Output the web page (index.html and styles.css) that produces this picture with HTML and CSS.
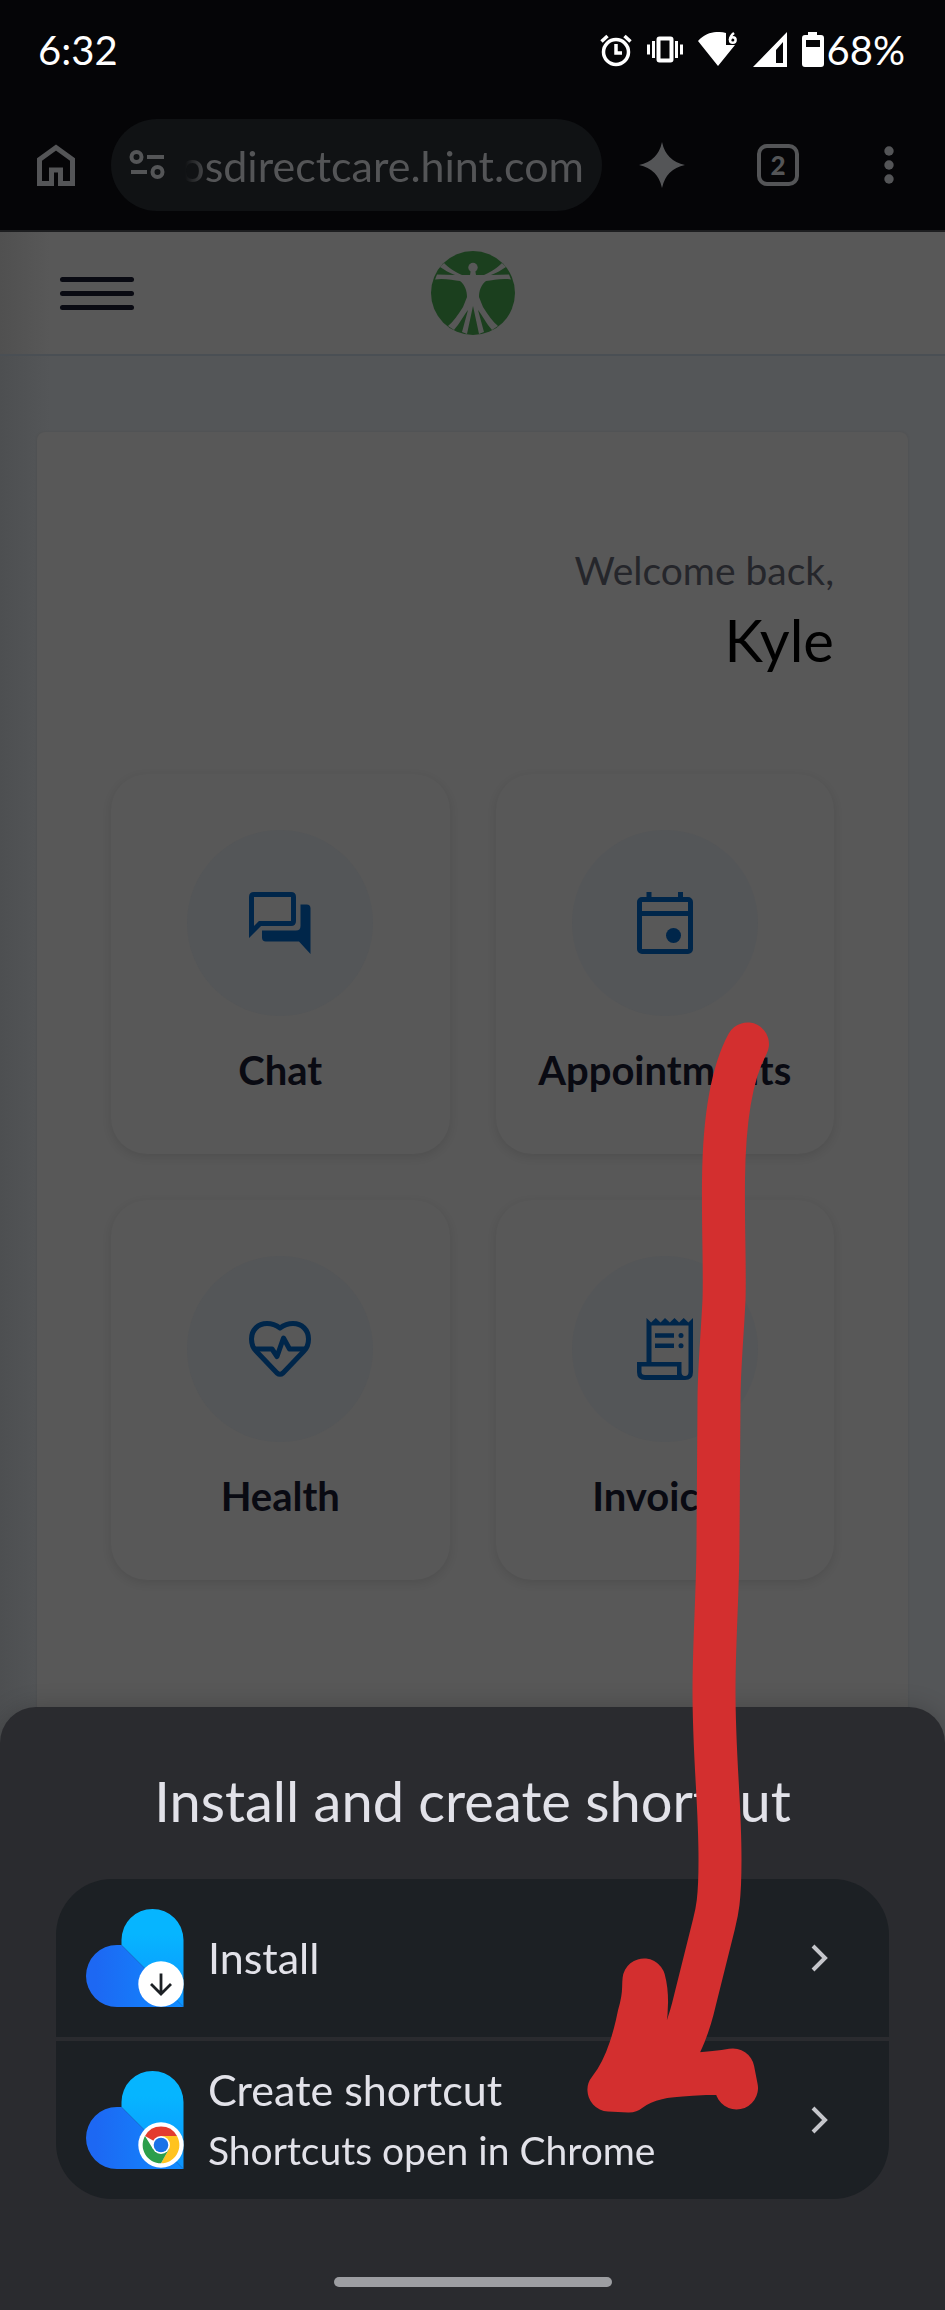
FILE: index.html
```html
<!DOCTYPE html>
<html lang="en">
<head>
    <meta charset="UTF-8">
    <meta name="viewport" content="width=device-width, initial-scale=1.0">
    <title>Install and create shortcut</title>
    <link rel="stylesheet" href="styles.css">
</head>
<body>
    <!-- status bar -->
    <div class="status-bar">
        <span class="clock">6:32</span>
        <div class="status-icons">
            <svg width="32" height="34" viewBox="0 0 32 34" fill="none" stroke="#fff" stroke-width="3.500">
                <circle cx="16" cy="19" r="12.500"/>
                <path d="M16 11v9h6M1.500 8.500l6-5.500M30.500 8.500l-6-5.500"/>
            </svg>
            <svg width="36" height="34" viewBox="0 0 36 34" fill="none" stroke="#fff">
                <rect x="11.500" y="5.500" width="13" height="22" rx="1" stroke-width="4"/>
                <path d="M6.500 8v17M29.500 8v17M1.500 11.500v10M34.500 11.500v10" stroke-width="3"/>
            </svg>
            <svg width="40" height="36" viewBox="0 0 40 36">
                <path d="M0 9C9-1 20-1 28 1v12h9L20 34z" fill="#fff"/>
                <path d="M36 1q-4 3-4 7" fill="none" stroke="#fff" stroke-width="2.500"/>
                <circle cx="34.800" cy="8" r="2.800" fill="none" stroke="#fff" stroke-width="2.500"/>
            </svg>
            <svg width="34" height="36" viewBox="0 0 34 36">
                <path d="M34 0v35H0zM30 10l-7 8v13h7z" fill="#fff" fill-rule="evenodd"/>
            </svg>
            <div class="battery">
                <svg width="22" height="36" viewBox="0 0 22 36">
                    <path d="M6 0h9v3h4q3 0 3 3v26q0 3-3 3H3q-3 0-3-3V6q0-3 3-3h3zM4 8v7h14V8z" fill="#fff" fill-rule="evenodd"/>
                </svg>
                <span>68%</span>
            </div>
        </div>
    </div>

    <!-- browser toolbar -->
    <div class="toolbar">
        <button class="tool" type="button" aria-label="Home">
            <svg width="38" height="42" viewBox="0 0 38 42" fill="none" stroke="#545557" stroke-width="5">
                <path d="M2.500 39.500V15.500L19 3.500l16.500 12v24h-12V26h-9v13.500z"/>
            </svg>
        </button>
        <div class="address">
            <svg width="36" height="30" viewBox="0 0 36 30" fill="none" stroke="#545557" stroke-width="4">
                <circle cx="7.500" cy="7" r="5"/>
                <circle cx="28.500" cy="22" r="5"/>
                <path d="M18 7h17M2 22h16"/>
            </svg>
            <input type="text" class="url" value="osdirectcare.hint.com" aria-label="Address">
        </div>
        <button class="tool" type="button" aria-label="Assistant">
            <svg width="46" height="46" viewBox="0 0 46 46">
                <path d="M23 0Q27 19 46 23Q27 27 23 46Q19 27 0 23Q19 19 23 0z" fill="#545557"/>
            </svg>
        </button>
        <button class="tool tabs" type="button" aria-label="Open tabs">2</button>
        <button class="tool" type="button" aria-label="More">
            <svg width="10" height="38" viewBox="0 0 10 38" fill="#545557">
                <circle cx="5" cy="5" r="4.700"/>
                <circle cx="5" cy="19" r="4.700"/>
                <circle cx="5" cy="33" r="4.700"/>
            </svg>
        </button>
    </div>

    <div class="page">
        <header>
            <button class="menu" type="button" aria-label="Menu"><i></i><i></i><i></i></button>
            <svg class="logo" width="84" height="84" viewBox="0 0 84 84">
                <circle cx="42" cy="42" r="42" fill="#1b3f1e"/>
                <g fill="#585858">
                    <circle cx="42" cy="16.500" r="4.700"/>
                    <path d="M40 18h4l1 6 8 0C62 20 67 16 71 12l4 4C70 19 66 22 60 24l18-.5 2 5C72 27 62 29 55 30C50 34 48 40 48 46L52 56C57 64 62 71 67 75l-6 4C55 72 51 64 47 59l6 22-5 2L42 55L36 83l-5-2L37 59C33 64 29 72 23 79l-6-4C22 71 27 64 32 56L36 46C36 40 34 34 29 30C22 29 12 27 4 28.500l2-5 18 .5C18 22 14 19 9 16l4-4C17 16 22 20 31 24h8z"/>
                </g>
            </svg>
        </header>

        <main class="card">
            <div class="welcome">
                <p>Welcome back,</p>
                <h1>Kyle</h1>
            </div>
            <nav class="tiles">
                <a href="#chat" class="tile">
                    <span class="circle">
                        <svg width="62" height="62" viewBox="0 0 62 62">
                            <path d="M2.500 40V5q0-2.500 2.500-2.500h37q2.500 0 2.500 2.500v24q0 2.500-2.500 2.500H11z" fill="#585858" stroke="#00264a" stroke-width="5"/>
                            <path d="M51.500 12.500h6q4 0 4 4V62L50 49.500H17q-4 0-4-4v-7h34q4.500 0 4.500-4.500z" fill="#00264a"/>
                        </svg>
                    </span>
                    Chat
                </a>
                <a href="#appointments" class="tile">
                    <span class="circle">
                        <svg width="62" height="62" viewBox="0 0 62 62" fill="#585858" stroke="#00264a" stroke-width="5">
                            <rect x="5.500" y="7.500" width="51" height="52" rx="2.500"/>
                            <path d="M15 0v6M46.500 0v6M5 21.500h52"/>
                            <circle cx="39.500" cy="43.500" r="7.500" fill="#00264a" stroke="none"/>
                        </svg>
                    </span>
                    Appointments
                </a>
                <a href="#health" class="tile">
                    <span class="circle">
                        <svg width="62" height="62" viewBox="0 0 62 62" fill="#585858" stroke="#00264a" stroke-width="5" stroke-linejoin="round">
                            <path d="M31 10C27 7 23 5.500 18 5.500C9 5.500 2.500 12 2.500 21c0 5 1.500 9 4.500 12l21 22q3 2.500 6 0l21-22c3-3 4.500-7 4.500-12C59.500 12 53 5.500 44 5.500c-5 0-9 1.500-13 4.500z"/>
                            <path d="M5 31h18l5 7.500L34.500 20l6 11H57" fill="none"/>
                        </svg>
                    </span>
                    Health
                </a>
                <a href="#invoices" class="tile">
                    <span class="circle">
                        <svg width="62" height="62" viewBox="0 0 62 62">
                            <path d="M12.500 0l4.600 4.600L21.800 0l4.700 4.600L31 0l4.800 4.600L40.500 0l4.600 4.600L49.700 0l4.700 4.600L59 0v54q0 8-8 8H11q-8 0-8-8V44h9.500z" fill="#00264a"/>
                            <path d="M17.500 7.500h37V54q0 4-3.500 4t-3.500-4V44h-30z" fill="#585858"/>
                            <path d="M7.500 48.500h35.500V57H11q-3.500 0-3.500-3z" fill="#585858"/>
                            <path d="M21 17.500h19M21 27.800h19" stroke="#00264a" stroke-width="4.500"/>
                            <circle cx="47" cy="17.500" r="2.500" fill="#00264a"/>
                            <circle cx="47" cy="27.800" r="2.500" fill="#00264a"/>
                        </svg>
                    </span>
                    Invoices
                </a>
            </nav>
        </main>
    </div>

    <!-- bottom sheet -->
    <section class="sheet">
        <h2>Install and create shortcut</h2>
        <div class="options">
            <button class="option" type="button">
                <svg width="98" height="98" viewBox="0 0 98 98">
                    <defs>
                        <linearGradient id="sky" x1="0" y1="0" x2="0" y2="1">
                            <stop offset="0.250" stop-color="#06b5ff"/>
                            <stop offset="1" stop-color="#0d93ff"/>
                        </linearGradient>
                        <linearGradient id="blue" x1="0" y1="0" x2="1" y2="0">
                            <stop offset="0.100" stop-color="#1d68f3"/>
                            <stop offset="1" stop-color="#0f8bff"/>
                        </linearGradient>
                    </defs>
                    <path d="M35.500 36V31a31 31 0 0 1 62 0V98z" fill="url(#sky)"/>
                    <path d="M35.500 36H31a31 31 0 0 0 0 62h66.500z" fill="url(#blue)"/>
                    <circle cx="75" cy="75" r="22.700" fill="#fff"/>
                    <path d="M75 64.500v20M65 75l10 10 10-10" fill="none" stroke="#1c2024" stroke-width="2.800"/>
                </svg>
                <span class="option-text">Install</span>
                <svg width="18" height="28" viewBox="0 0 18 28" fill="none" stroke="#c5c6cb" stroke-width="4">
                    <path d="M2 2l12 12L2 26"/>
                </svg>
            </button>
            <button class="option" type="button">
                <svg width="98" height="98" viewBox="0 0 98 98">
                    <path d="M35.500 36V31a31 31 0 0 1 62 0V98z" fill="url(#sky)"/>
                    <path d="M35.500 36H31a31 31 0 0 0 0 62h66.500z" fill="url(#blue)"/>
                    <circle cx="75" cy="74" r="22.700" fill="#fff"/>
                    <path d="M75 74L59 65A18.300 18.300 0 0 1 91 65z" fill="#e33b2e"/>
                    <path d="M75 65h16A18.300 18.300 0 0 1 75 92.300L83 78z" fill="#ffc31f"/>
                    <path d="M59 65A18.300 18.300 0 0 0 75 92.300L83 78H67z" fill="#2c9e4b"/>
                    <circle cx="75" cy="74" r="9" fill="#fff"/>
                    <circle cx="75" cy="74" r="7.300" fill="#1a73e8"/>
                </svg>
                <span class="option-text">Create shortcut<small>Shortcuts open in Chrome</small></span>
                <svg width="18" height="28" viewBox="0 0 18 28" fill="none" stroke="#c5c6cb" stroke-width="4">
                    <path d="M2 2l12 12L2 26"/>
                </svg>
            </button>
        </div>
        <div class="handle"></div>
    </section>

    <!-- hand drawn arrow over everything -->
    <svg class="arrow" width="190" height="1096" viewBox="584 1021 190 1096">
        <path d="M747.500 1044C729 1078 724 1130 723.500 1180C723 1230 725 1270 724 1300C722 1340 719 1370 719 1400L718 1540C718 1590 714 1640 714 1690C714 1760 720 1800 720 1860C720 1900 717 1912 714 1924L695 2000C687 2035 678 2048 665 2075L609 2090C625 2070 633 2045 639 2015C645 1995 643 1990 644 1980M644 1980C652 2010 640 2050 630 2088M609 2090L629 2091C655 2070 690 2078 733 2070L736.500 2088"/>
    </svg>
</body>
</html>
```
FILE: styles.css
```css
* {
    box-sizing: border-box;
}
body {
    margin: 0;
    min-height: 100vh;
    display: flex;
    flex-direction: column;
    position: relative;
    font-family: Lato, "Open Sans", sans-serif;
    background-color: #050507;
}
button {
    font-family: inherit;
    border: none;
    padding: 0;
    background: none;
}
svg {
    display: block;
    flex-shrink: 0;
}

.status-bar {
    display: flex;
    align-items: center;
    justify-content: space-between;
    height: 100px;
    padding: 0 40px 0 38px;
    color: #fff;
    font-size: 40px;
}
.status-icons {
    display: flex;
    align-items: center;
    gap: 15px;
}
.battery {
    display: flex;
    align-items: center;
    gap: 3px;
}

.toolbar {
    display: flex;
    align-items: center;
    height: 132px;
    padding: 0 51px 0 37px;
    border-bottom: 2px solid #1d1e20;
    color: #545557;
}
.tool {
    display: flex;
    align-items: center;
    justify-content: center;
    color: inherit;
}
.address {
    flex: 1;
    display: flex;
    align-items: center;
    height: 92px;
    margin: 0 37px 0 36px;
    padding: 0 18px;
    border-radius: 46px;
    background-color: #101214;
}
.url {
    flex: 1;
    width: 0;
    height: 60px;
    border: none;
    padding: 0;
    background: none;
    color: inherit;
    font-family: inherit;
    font-size: 43px;
    text-align: right;
    mask-image: linear-gradient(to right, transparent 20px, #000 44px);
}
.tabs {
    width: 42px;
    height: 42px;
    margin: 0 85px 0 72px;
    border: 4px solid #545557;
    border-radius: 10px;
    font-size: 26px;
    font-weight: 900;
}

.page {
    flex: 1;
    display: flex;
    flex-direction: column;
    background: linear-gradient(to right, #4d4f51, #545658 50px);
}
header {
    display: flex;
    align-items: center;
    height: 124px;
    padding: 0 60px;
    border-bottom: 2px solid #4a4f54;
    background: linear-gradient(to right, #505050, #585858 50px);
}
.menu {
    flex: 1;
    display: flex;
    flex-direction: column;
    gap: 9px;
}
.menu i {
    width: 74px;
    height: 5px;
    border-radius: 3px;
    background-color: #090a12;
}
header::after {
    content: "";
    flex: 1;
}

.card {
    flex: 1;
    margin: 76px 37px 0;
    padding: 110px 74px 0;
    border-radius: 8px 8px 0 0;
    background-color: #585858;
    box-shadow: 0 0 3px rgba(0, 0, 0, 0.08);
}
.welcome {
    text-align: right;
}
.welcome p {
    margin: 0;
    font-size: 39px;
    line-height: 56px;
    color: #25262b;
}
.welcome h1 {
    margin: 0;
    font-size: 58px;
    line-height: 84px;
    font-weight: 400;
    color: #000;
}
.tiles {
    display: grid;
    grid-template-columns: 1fr 1fr;
    gap: 46px;
    margin-top: 92px;
}
.tile {
    display: flex;
    flex-direction: column;
    align-items: center;
    height: 380px;
    padding-top: 56px;
    border-radius: 36px;
    box-shadow: 0 3px 10px rgba(0, 0, 0, 0.1);
    font-size: 40px;
    line-height: 48px;
    font-weight: 700;
    color: #090a12;
    text-decoration: none;
}
.circle {
    display: flex;
    align-items: center;
    justify-content: center;
    width: 186px;
    height: 186px;
    margin-bottom: 30px;
    border-radius: 50%;
    background-color: #545658;
}

.sheet {
    position: fixed;
    left: 0;
    right: 0;
    bottom: 0;
    padding: 58px 56px 23px;
    border-radius: 36px 36px 0 0;
    background-color: #2a2b2f;
    box-shadow: 0 0 24px rgba(0, 0, 0, 0.2);
    color: #e2e2e9;
}
.sheet h2 {
    margin: 0 0 42px;
    font-size: 56px;
    line-height: 72px;
    font-weight: 400;
    text-align: center;
}
.options {
    display: flex;
    flex-direction: column;
    gap: 4px;
    overflow: hidden;
    border-radius: 56px;
}
.option {
    display: flex;
    align-items: center;
    gap: 24px;
    height: 158px;
    padding: 0 60px 0 30px;
    background-color: #1c2024;
    color: inherit;
    text-align: left;
}
.option-text {
    flex: 1;
    font-size: 43px;
    line-height: 60px;
}
.option-text small {
    display: block;
    font-size: 39px;
}
.handle {
    width: 278px;
    height: 10px;
    margin: 78px auto 0;
    border-radius: 5px;
    background-color: #9d9ea2;
}

.arrow {
    position: absolute;
    top: 1021px;
    left: 584px;
    pointer-events: none;
}
.arrow path {
    stroke: #d32f2f;
    stroke-width: 43px;
    stroke-linecap: round;
    stroke-linejoin: round;
    fill: none;
}
```
